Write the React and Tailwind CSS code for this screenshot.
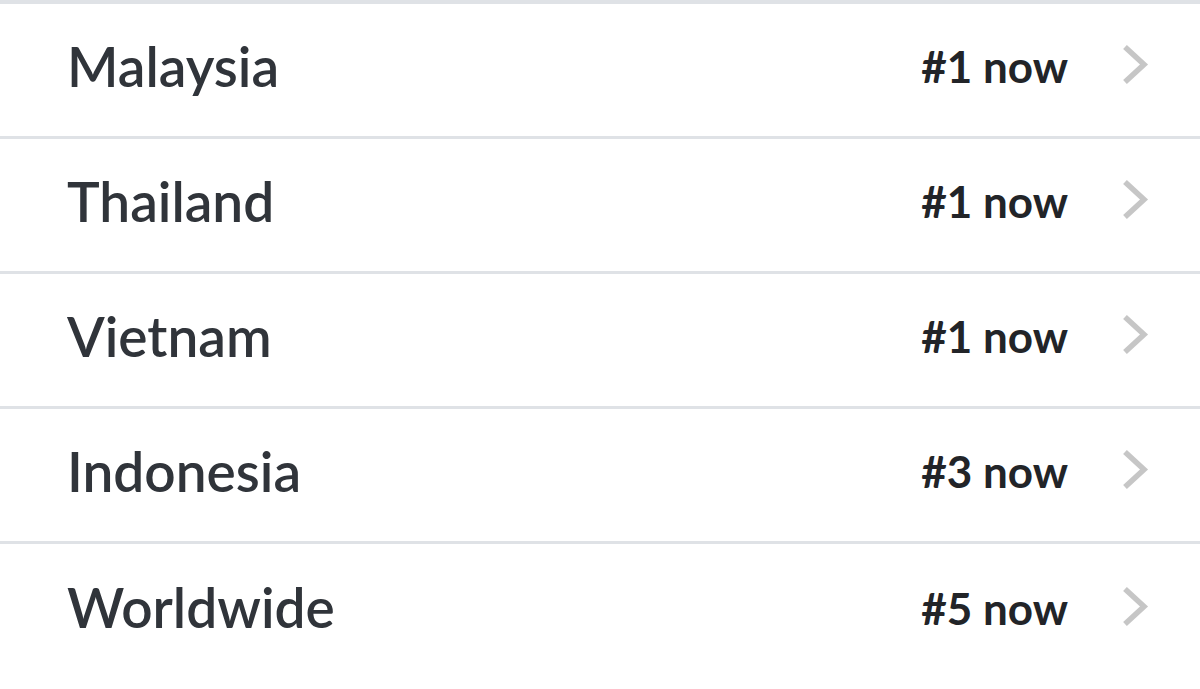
const rows = [
  { name: 'Malaysia', rank: '#1 now' },
  { name: 'Thailand', rank: '#1 now' },
  { name: 'Vietnam', rank: '#1 now' },
  { name: 'Indonesia', rank: '#3 now' },
  { name: 'Worldwide', rank: '#5 now' },
];

function Chevron() {
  return (
    <svg width="28" height="42" viewBox="0 0 28 42" className="ml-[53px] -mt-[2px]" fill="none">
      <polyline points="4,3 23,20.5 4,38" stroke="#c6c6c6" strokeWidth="5.5" strokeLinejoin="miter" />
    </svg>
  );
}

export default function App() {
  return (
    <div
      className="min-h-screen bg-white border-t-4 border-[#dfe2e6]"
      style={{ fontFamily: 'Lato, "Noto Sans", sans-serif' }}
    >
      {rows.map((row, i) => (
        <div
          key={row.name}
          className={`flex items-center h-[135px] pl-[67px] pr-[51px] pb-[8px] ${
            i < rows.length - 1 ? 'border-b-[3px] border-[#dfe2e6]' : ''
          }`}
        >
          <span className="flex-1 text-[55px] font-semibold text-[#30343a]">
            {row.name}
          </span>
          <span className="text-[44px] font-bold text-[#222428]">{row.rank}</span>
          <Chevron />
        </div>
      ))}
    </div>
  );
}
